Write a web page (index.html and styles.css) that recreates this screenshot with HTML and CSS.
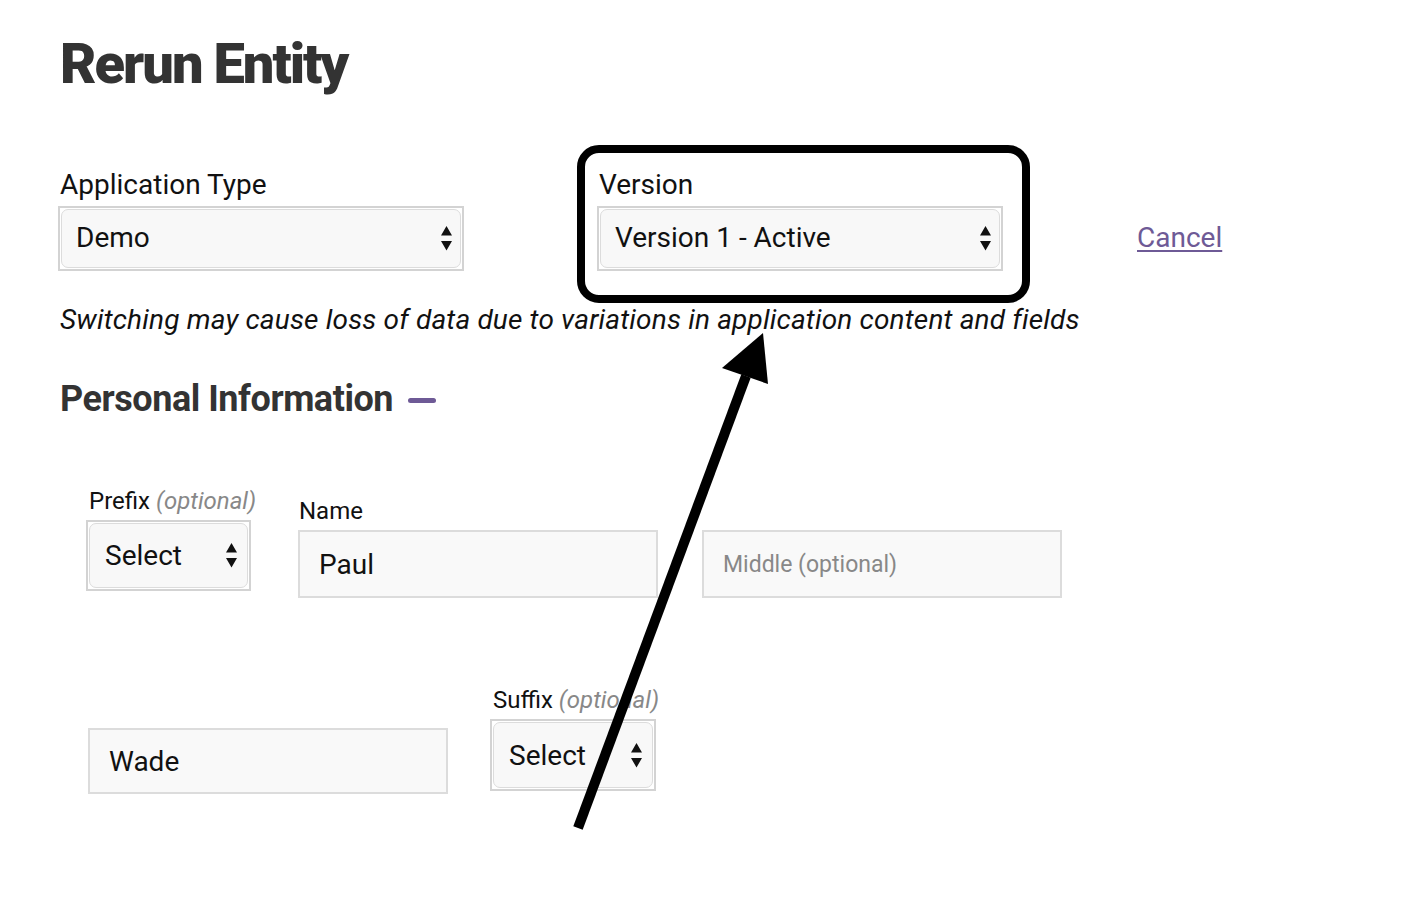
FILE: index.html
```html
<!DOCTYPE html>
<html lang="en">
<head>
<meta charset="utf-8">
<title>Rerun Entity</title>
<link rel="stylesheet" href="styles.css">
</head>
<body>
<main class="page">
  <h1 class="title">Rerun Entity</h1>

  <div class="top-row">
    <div class="field field-app">
      <label class="label">Application Type</label>
      <div class="select select-wide">
        <div class="select-inner">
          <span class="select-text">Demo</span>
          <svg class="arrows" width="11" height="25" viewBox="0 0 11 25"><path d="M5.5 0 L11 9.5 L0 9.5 Z M0 15 L11 15 L5.5 24.5 Z" fill="#111"/></svg>
        </div>
      </div>
    </div>
    <div class="field field-version">
      <label class="label">Version</label>
      <div class="select select-wide">
        <div class="select-inner">
          <span class="select-text">Version 1 - Active</span>
          <svg class="arrows" width="11" height="25" viewBox="0 0 11 25"><path d="M5.5 0 L11 9.5 L0 9.5 Z M0 15 L11 15 L5.5 24.5 Z" fill="#111"/></svg>
        </div>
      </div>
    </div>
    <a class="cancel" href="#">Cancel</a>
  </div>

  <p class="note">Switching may cause loss of data due to variations in application content and fields</p>

  <h2 class="section-title">Personal Information <span class="dash"></span></h2>

  <div class="name-row">
    <div class="field field-prefix">
      <label class="label-sm">Prefix <em class="opt">(optional)</em></label>
      <div class="select select-small">
        <div class="select-inner">
          <span class="select-text">Select</span>
          <svg class="arrows" width="11" height="25" viewBox="0 0 11 25"><path d="M5.5 0 L11 9.5 L0 9.5 Z M0 15 L11 15 L5.5 24.5 Z" fill="#111"/></svg>
        </div>
      </div>
    </div>
    <div class="field field-name">
      <label class="label-sm">Name</label>
      <div class="input">Paul</div>
    </div>
    <div class="field field-middle">
      <div class="input placeholder">Middle (optional)</div>
    </div>
  </div>

  <div class="name-row row-two">
    <div class="field field-last">
      <div class="input">Wade</div>
    </div>
    <div class="field field-suffix">
      <label class="label-sm">Suffix <em class="opt">(optional)</em></label>
      <div class="select select-small">
        <div class="select-inner">
          <span class="select-text">Select</span>
          <svg class="arrows" width="11" height="25" viewBox="0 0 11 25"><path d="M5.5 0 L11 9.5 L0 9.5 Z M0 15 L11 15 L5.5 24.5 Z" fill="#111"/></svg>
        </div>
      </div>
    </div>
  </div>

  <div class="highlight-box"></div>
  <svg class="pointer" width="1418" height="906" viewBox="0 0 1418 906">
    <line x1="578" y1="828" x2="746" y2="376" stroke="#000" stroke-width="10"/>
    <polygon points="763,333 722,368 768,384" fill="#000"/>
  </svg>
</main>
</body>
</html>
```

FILE: styles.css
```css
* { box-sizing: border-box; }

html, body {
  margin: 0;
  padding: 0;
  background: #fff;
}

body {
  font-family: Roboto, "Liberation Sans", Arial, sans-serif;
  color: #111;
}

.page {
  position: relative;
  width: 1418px;
  height: 906px;
  padding: 32px 0 0 60px;
  overflow: hidden;
}

.title {
  margin: 0;
  font-size: 56px;
  line-height: 64px;
  font-weight: 900;
  letter-spacing: -2px;
  color: #333;
}

.top-row {
  display: flex;
  align-items: flex-end;
  margin-top: 73px;
  margin-left: -2px;
}

.field {
  display: flex;
  flex-direction: column;
}

.field-version {
  margin-left: 133px;
}

.label {
  display: block;
  font-size: 28px;
  line-height: 32px;
  margin: 0 0 5px 2px;
  color: #111;
}

.select {
  border: 2px solid #d3d3d3;
  padding: 1px;
  background: #fff;
}

.select-inner {
  display: flex;
  align-items: center;
  justify-content: space-between;
  height: 100%;
  border: 1px solid #dcdcdc;
  border-radius: 7px;
  background: #f8f8f8;
}

.select-wide {
  width: 406px;
  height: 65px;
}

.select-wide .select-inner {
  padding: 0 8px 0 14px;
}

.select-wide .select-text {
  margin-top: -3px;
}

.select-text {
  font-size: 28px;
  color: #111;
}

.arrows {
  display: block;
  flex: none;
}

.cancel {
  margin: 0 0 17px 134px;
  font-size: 28px;
  line-height: 32px;
  color: #6e5a96;
  text-decoration: underline;
  text-underline-offset: 3px;
}

.note {
  margin: 32px 0 0;
  font-size: 28px;
  line-height: 34px;
  font-style: italic;
  letter-spacing: 0.17px;
  color: #111;
}

.section-title {
  display: flex;
  align-items: center;
  margin: 40px 0 0;
  font-size: 36px;
  line-height: 44px;
  font-weight: 700;
  letter-spacing: -0.45px;
  color: #333;
}

.dash {
  display: inline-block;
  width: 28px;
  height: 5px;
  margin-left: 15px;
  margin-top: 2px;
  border-radius: 3px;
  background: #6e5a96;
}

.name-row {
  display: flex;
  align-items: flex-start;
  margin-top: 67px;
  padding-left: 26px;
}

.label-sm {
  display: block;
  font-size: 24px;
  line-height: 26px;
  margin: 0 0 6px 3px;
  white-space: nowrap;
  color: #111;
}

.opt {
  color: #888;
  font-style: italic;
}

.field-prefix {
  width: 165px;
}

.select-small {
  width: 165px;
  height: 71px;
}

.select-small .select-inner {
  padding: 0 10px 0 15px;
}

.field-name {
  margin-left: 47px;
  margin-top: 10px;
}

.field-name .label-sm {
  margin-left: 1px;
}

.input {
  display: flex;
  align-items: center;
  width: 360px;
  height: 68px;
  padding: 0 19px;
  border: 2px solid #dcdcdc;
  background: #f9f9f9;
  font-size: 28px;
  color: #111;
}

.input.placeholder {
  font-size: 23px;
  color: #888;
}

.field-middle {
  margin-left: 44px;
  margin-top: 42px;
}

.row-two {
  margin-top: 89px;
  padding-left: 28px;
}

.field-last {
  margin-top: 41px;
}

.field-last .input {
  height: 66px;
}

.field-suffix {
  width: 166px;
  margin-left: 42px;
}

.field-suffix .select-small {
  width: 166px;
  height: 72px;
}

.highlight-box {
  position: absolute;
  left: 577px;
  top: 145px;
  width: 453px;
  height: 158px;
  border: 8px solid #000;
  border-radius: 22px;
  pointer-events: none;
}

.pointer {
  position: absolute;
  left: 0;
  top: 0;
  pointer-events: none;
}
```
